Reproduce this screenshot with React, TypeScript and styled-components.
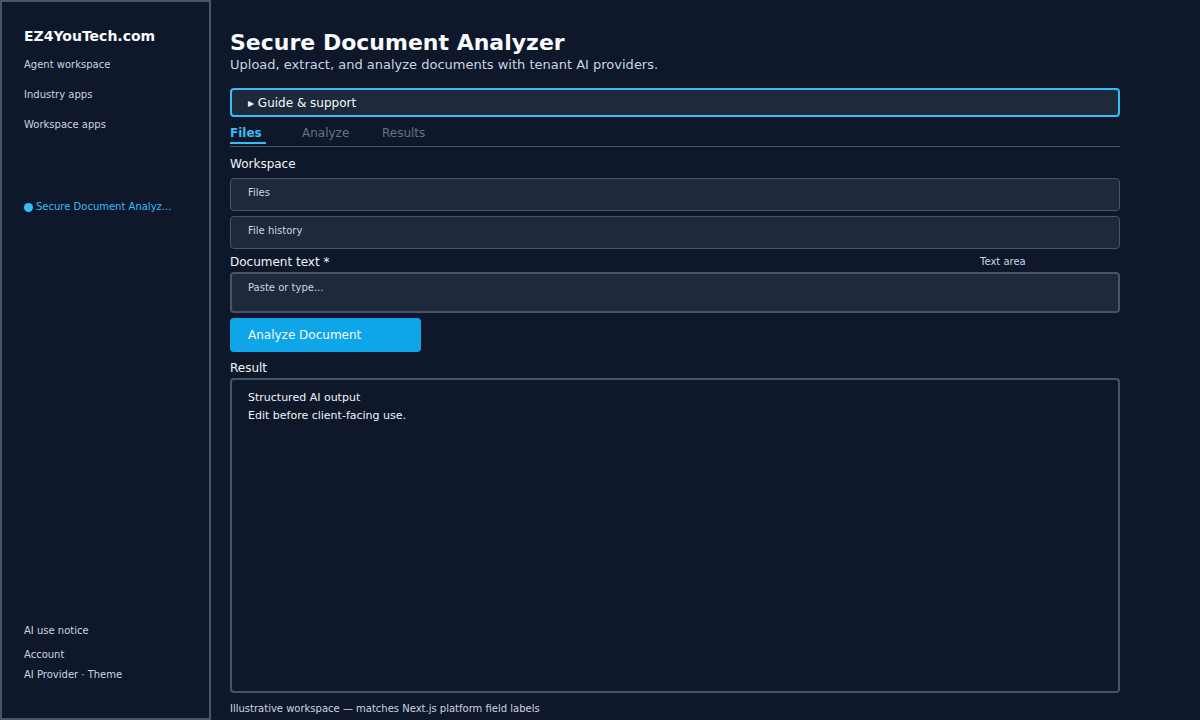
import React from 'react'
import styled, { createGlobalStyle } from 'styled-components'

const GlobalStyle = createGlobalStyle`
  html, body {
    margin: 0;
    padding: 0;
    background: #0f172a;
  }
  body {
    font-family: 'DejaVu Sans', 'Liberation Sans', sans-serif;
    color: #e2e8f0;
  }
  * {
    box-sizing: border-box;
  }
`

const Shell = styled.div`
  display: grid;
  grid-template-columns: 211px 1fr;
  width: 1200px;
  height: 720px;
  background: #0f172a;
  overflow: hidden;
`

const Sidebar = styled.aside`
  display: flex;
  flex-direction: column;
  height: 720px;
  border: 2px solid #475569;
  padding: 26px 0 37px 22px;
  background: #0f172a;
`

const Brand = styled.div`
  font-size: 14px;
  line-height: 17px;
  font-weight: 700;
  color: #f8fafc;
  margin-bottom: 14px;
`

const NavItem = styled.div<{ $active?: boolean }>`
  font-size: 10px;
  line-height: 12px;
  color: ${p => (p.$active ? '#38bdf8' : '#cbd5e1')};
  white-space: nowrap;
  overflow: hidden;
  text-overflow: ellipsis;
  max-width: 150px;
  display: flex;
  align-items: center;
  gap: 3px;
`

const NavList = styled.nav`
  display: flex;
  flex-direction: column;
  gap: 18px;
`

const ActiveGroup = styled.div`
  margin-top: 70px;
`

const Dot = styled.span`
  width: 9px;
  height: 9px;
  border-radius: 50%;
  background: #38bdf8;
  flex: none;
`

const Spacer = styled.div`
  flex: 1;
`

const FooterNav = styled.div`
  display: flex;
  flex-direction: column;
  gap: 12px;

  & > :last-child {
    margin-top: -4px;
  }
`

const Main = styled.main`
  display: flex;
  flex-direction: column;
  padding: 30px 80px 0 19px;
`

const Title = styled.h1`
  margin: 0;
  font-size: 22px;
  line-height: 26px;
  font-weight: 700;
  color: #f8fafc;
`

const Subtitle = styled.p`
  margin: 1px 0 0;
  font-size: 13px;
  line-height: 16px;
  color: #cbd5e1;
`

const Guide = styled.div`
  margin-top: 15px;
  height: 29px;
  border: 2px solid #38bdf8;
  border-radius: 4px;
  background: #1e293b;
  padding: 0 16px;
  display: flex;
  align-items: center;
  font-size: 12px;
  color: #f8fafc;
`

const Tabs = styled.div`
  margin-top: 9px;
  display: grid;
  grid-template-columns: 72px 80px auto;
  padding-bottom: 2px;
  border-bottom: 1px solid #475569;
`

const Tab = styled.div<{ $active?: boolean }>`
  justify-self: start;
  font-size: 12px;
  line-height: 14px;
  padding: 0 4px 2px 0;
  font-weight: ${p => (p.$active ? 700 : 400)};
  color: ${p => (p.$active ? '#38bdf8' : '#64748b')};
  border-bottom: 2px solid ${p => (p.$active ? '#38bdf8' : 'transparent')};
`

const Label = styled.div<{ $gap?: number }>`
  margin-top: ${p => p.$gap ?? 8}px;
  font-size: 12px;
  line-height: 14px;
  color: #f1f5f9;
`

const LabelRow = styled.div`
  margin-top: 6px;
  display: grid;
  grid-template-columns: 1fr 140px;
  align-items: center;
`

const Hint = styled.span`
  font-size: 10px;
  line-height: 12px;
  color: #cbd5e1;
`

const FieldBox = styled.div<{ $gap: number }>`
  margin-top: ${p => p.$gap}px;
  height: 33px;
  border: 1px solid #475569;
  border-radius: 4px;
  background: #1e293b;
  padding: 8px 17px;
  font-size: 10px;
  line-height: 12px;
  color: #cbd5e1;
`

const TextArea = styled.div`
  margin-top: 3px;
  height: 41px;
  border: 2px solid #475569;
  border-radius: 4px;
  background: #1e293b;
  padding: 8px 16px;
  font-size: 10px;
  line-height: 12px;
  color: #cbd5e1;
`

const Button = styled.button`
  margin-top: 5px;
  width: 191px;
  height: 34px;
  border: none;
  border-radius: 4px;
  background: #0ea5e9;
  color: #f8fafc;
  font-family: inherit;
  font-size: 12px;
  text-align: left;
  padding: 0 18px;
`

const ResultBox = styled.div`
  margin-top: 3px;
  height: 315px;
  border: 2px solid #475569;
  border-radius: 4px;
  background: #0f172a;
  padding: 9px 16px;
  font-size: 11px;
  line-height: 18px;
  color: #f1f5f9;
`

const Footnote = styled.div`
  margin-top: 10px;
  font-size: 10px;
  line-height: 12px;
  color: #cbd5e1;
`

export default function App() {
  return (
    <>
      <GlobalStyle />
      <Shell>
        <Sidebar>
          <Brand>EZ4YouTech.com</Brand>
          <NavList>
            <NavItem>Agent workspace</NavItem>
            <NavItem>Industry apps</NavItem>
            <NavItem>Workspace apps</NavItem>
          </NavList>
          <ActiveGroup>
            <NavItem $active>
              <Dot />
              Secure Document Analyz...
            </NavItem>
          </ActiveGroup>
          <Spacer />
          <FooterNav>
            <NavItem>AI use notice</NavItem>
            <NavItem>Account</NavItem>
            <NavItem>AI Provider · Theme</NavItem>
          </FooterNav>
        </Sidebar>
        <Main>
          <Title>Secure Document Analyzer</Title>
          <Subtitle>Upload, extract, and analyze documents with tenant AI providers.</Subtitle>
          <Guide>▸ Guide &amp; support</Guide>
          <Tabs>
            <Tab $active>Files</Tab>
            <Tab>Analyze</Tab>
            <Tab>Results</Tab>
          </Tabs>
          <Label $gap={10}>Workspace</Label>
          <FieldBox $gap={7}>Files</FieldBox>
          <FieldBox $gap={5}>File history</FieldBox>
          <LabelRow>
            <Label $gap={0}>Document text *</Label>
            <Hint>Text area</Hint>
          </LabelRow>
          <TextArea>Paste or type...</TextArea>
          <Button>Analyze Document</Button>
          <Label $gap={9}>Result</Label>
          <ResultBox>
            <div>Structured AI output</div>
            <div>Edit before client-facing use.</div>
          </ResultBox>
          <Footnote>Illustrative workspace — matches Next.js platform field labels</Footnote>
        </Main>
      </Shell>
    </>
  )
}
